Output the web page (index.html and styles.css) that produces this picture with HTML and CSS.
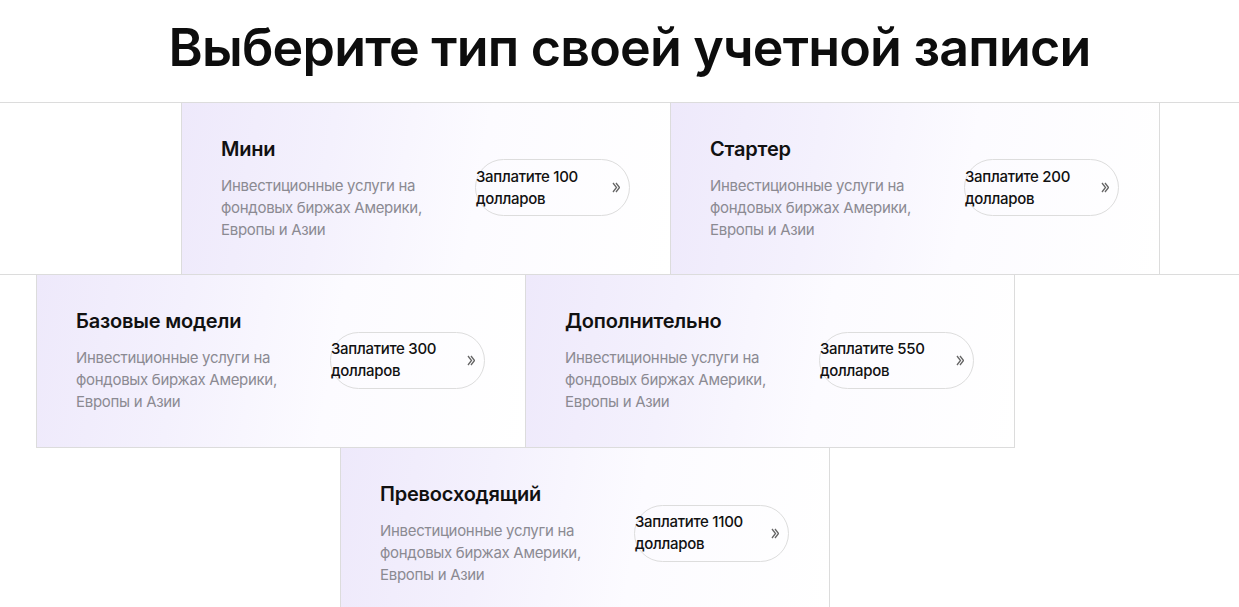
FILE: index.html
```html
<!DOCTYPE html>
<html lang="ru">
<head>
<meta charset="utf-8">
<title>Выберите тип своей учетной записи</title>
<link rel="stylesheet" href="styles.css">
</head>
<body>
<header class="head">
  <h1 class="title">Выберите тип своей учетной записи</h1>
</header>
<main class="plans">
  <div class="row row-1">
    <div class="card">
      <div class="info">
        <h2 class="name">Мини</h2>
        <p class="desc">Инвестиционные услуги на фондовых биржах Америки, Европы и Азии</p>
      </div>
      <button class="pay"><span class="pay-text">Заплатите 100 долларов</span><svg class="arrow" viewBox="0 0 8 11" width="8" height="11"><path d="M1 1l3.5 4.5L1 10M4 1l3.5 4.5L4 10" fill="none" stroke="currentColor" stroke-width="1.3"/></svg></button>
    </div>
    <div class="card">
      <div class="info">
        <h2 class="name">Стартер</h2>
        <p class="desc">Инвестиционные услуги на фондовых биржах Америки, Европы и Азии</p>
      </div>
      <button class="pay"><span class="pay-text">Заплатите 200 долларов</span><svg class="arrow" viewBox="0 0 8 11" width="8" height="11"><path d="M1 1l3.5 4.5L1 10M4 1l3.5 4.5L4 10" fill="none" stroke="currentColor" stroke-width="1.3"/></svg></button>
    </div>
  </div>
  <div class="row row-2">
    <div class="card">
      <div class="info">
        <h2 class="name">Базовые модели</h2>
        <p class="desc">Инвестиционные услуги на фондовых биржах Америки, Европы и Азии</p>
      </div>
      <button class="pay"><span class="pay-text">Заплатите 300 долларов</span><svg class="arrow" viewBox="0 0 8 11" width="8" height="11"><path d="M1 1l3.5 4.5L1 10M4 1l3.5 4.5L4 10" fill="none" stroke="currentColor" stroke-width="1.3"/></svg></button>
    </div>
    <div class="card">
      <div class="info">
        <h2 class="name">Дополнительно</h2>
        <p class="desc">Инвестиционные услуги на фондовых биржах Америки, Европы и Азии</p>
      </div>
      <button class="pay"><span class="pay-text">Заплатите 550 долларов</span><svg class="arrow" viewBox="0 0 8 11" width="8" height="11"><path d="M1 1l3.5 4.5L1 10M4 1l3.5 4.5L4 10" fill="none" stroke="currentColor" stroke-width="1.3"/></svg></button>
    </div>
  </div>
  <div class="row row-3">
    <div class="card">
      <div class="info">
        <h2 class="name">Превосходящий</h2>
        <p class="desc">Инвестиционные услуги на фондовых биржах Америки, Европы и Азии</p>
      </div>
      <button class="pay"><span class="pay-text">Заплатите 1100 долларов</span><svg class="arrow" viewBox="0 0 8 11" width="8" height="11"><path d="M1 1l3.5 4.5L1 10M4 1l3.5 4.5L4 10" fill="none" stroke="currentColor" stroke-width="1.3"/></svg></button>
    </div>
  </div>
</main>
</body>
</html>
```
FILE: styles.css
```css
* { box-sizing: border-box; }
html, body { margin: 0; padding: 0; background: #fff; }
body {
  font-family: Inter, "Noto Sans", "DejaVu Sans", sans-serif;
  color: #111;
  overflow: hidden;
}
.head {
  height: 102px;
  display: flex;
  align-items: center;
  justify-content: center;
  padding-left: 20px;
}
.title {
  margin: 0;
  font-size: 52px;
  font-weight: 600;
  letter-spacing: -0.8px;
  line-height: 1;
  color: #0d0d0d;
  padding-bottom: 6px;
}
.row {
  display: flex;
}
.row-1 {
  border-top: 1px solid #dcdcdc;
  border-bottom: 1px solid #dcdcdc;
  padding-left: 181px;
}
.row-2 {
  margin-left: 36px;
  width: fit-content;
  border-bottom: 1px solid #dcdcdc;
}
.row-3 {
  margin-left: 340px;
}
.card {
  width: 489px;
  height: 172px;
  border-left: 1px solid #dcdcdc;
  padding: 32px 41px 34px 39px;
  display: flex;
  align-items: center;
  background: linear-gradient(100deg, #eee9fb 0%, #f4f1fd 30%, #fcfbff 60%, #fff 100%);
}
.row-1 .card { height: 171px; }
.card:last-child { border-right: 1px solid #dcdcdc; width: 490px; }
.info {
  width: 254px;
  flex: none;
}
.name {
  margin: 0 0 12px;
  font-size: 20px;
  line-height: 28px;
  font-weight: 600;
  letter-spacing: -0.2px;
  color: #111;
}
.desc {
  margin: 0;
  width: 222px;
  font-size: 15px;
  line-height: 22px;
  color: #8b8a92;
  letter-spacing: -0.3px;
}
.pay {
  width: 155px;
  height: 57px;
  flex: none;
  border: 1px solid #dddddd;
  border-radius: 29px;
  background: transparent;
  padding: 0 9px 0 0;
  display: flex;
  align-items: center;
  justify-content: space-between;
  font-family: inherit;
  cursor: pointer;
  text-align: left;
}
.pay-text {
  width: 120px;
  font-size: 15px;
  line-height: 22px;
  font-weight: 500;
  color: #111;
  letter-spacing: -0.3px;
}
.arrow {
  display: block;
  color: #666;
  flex: none;
}
```
